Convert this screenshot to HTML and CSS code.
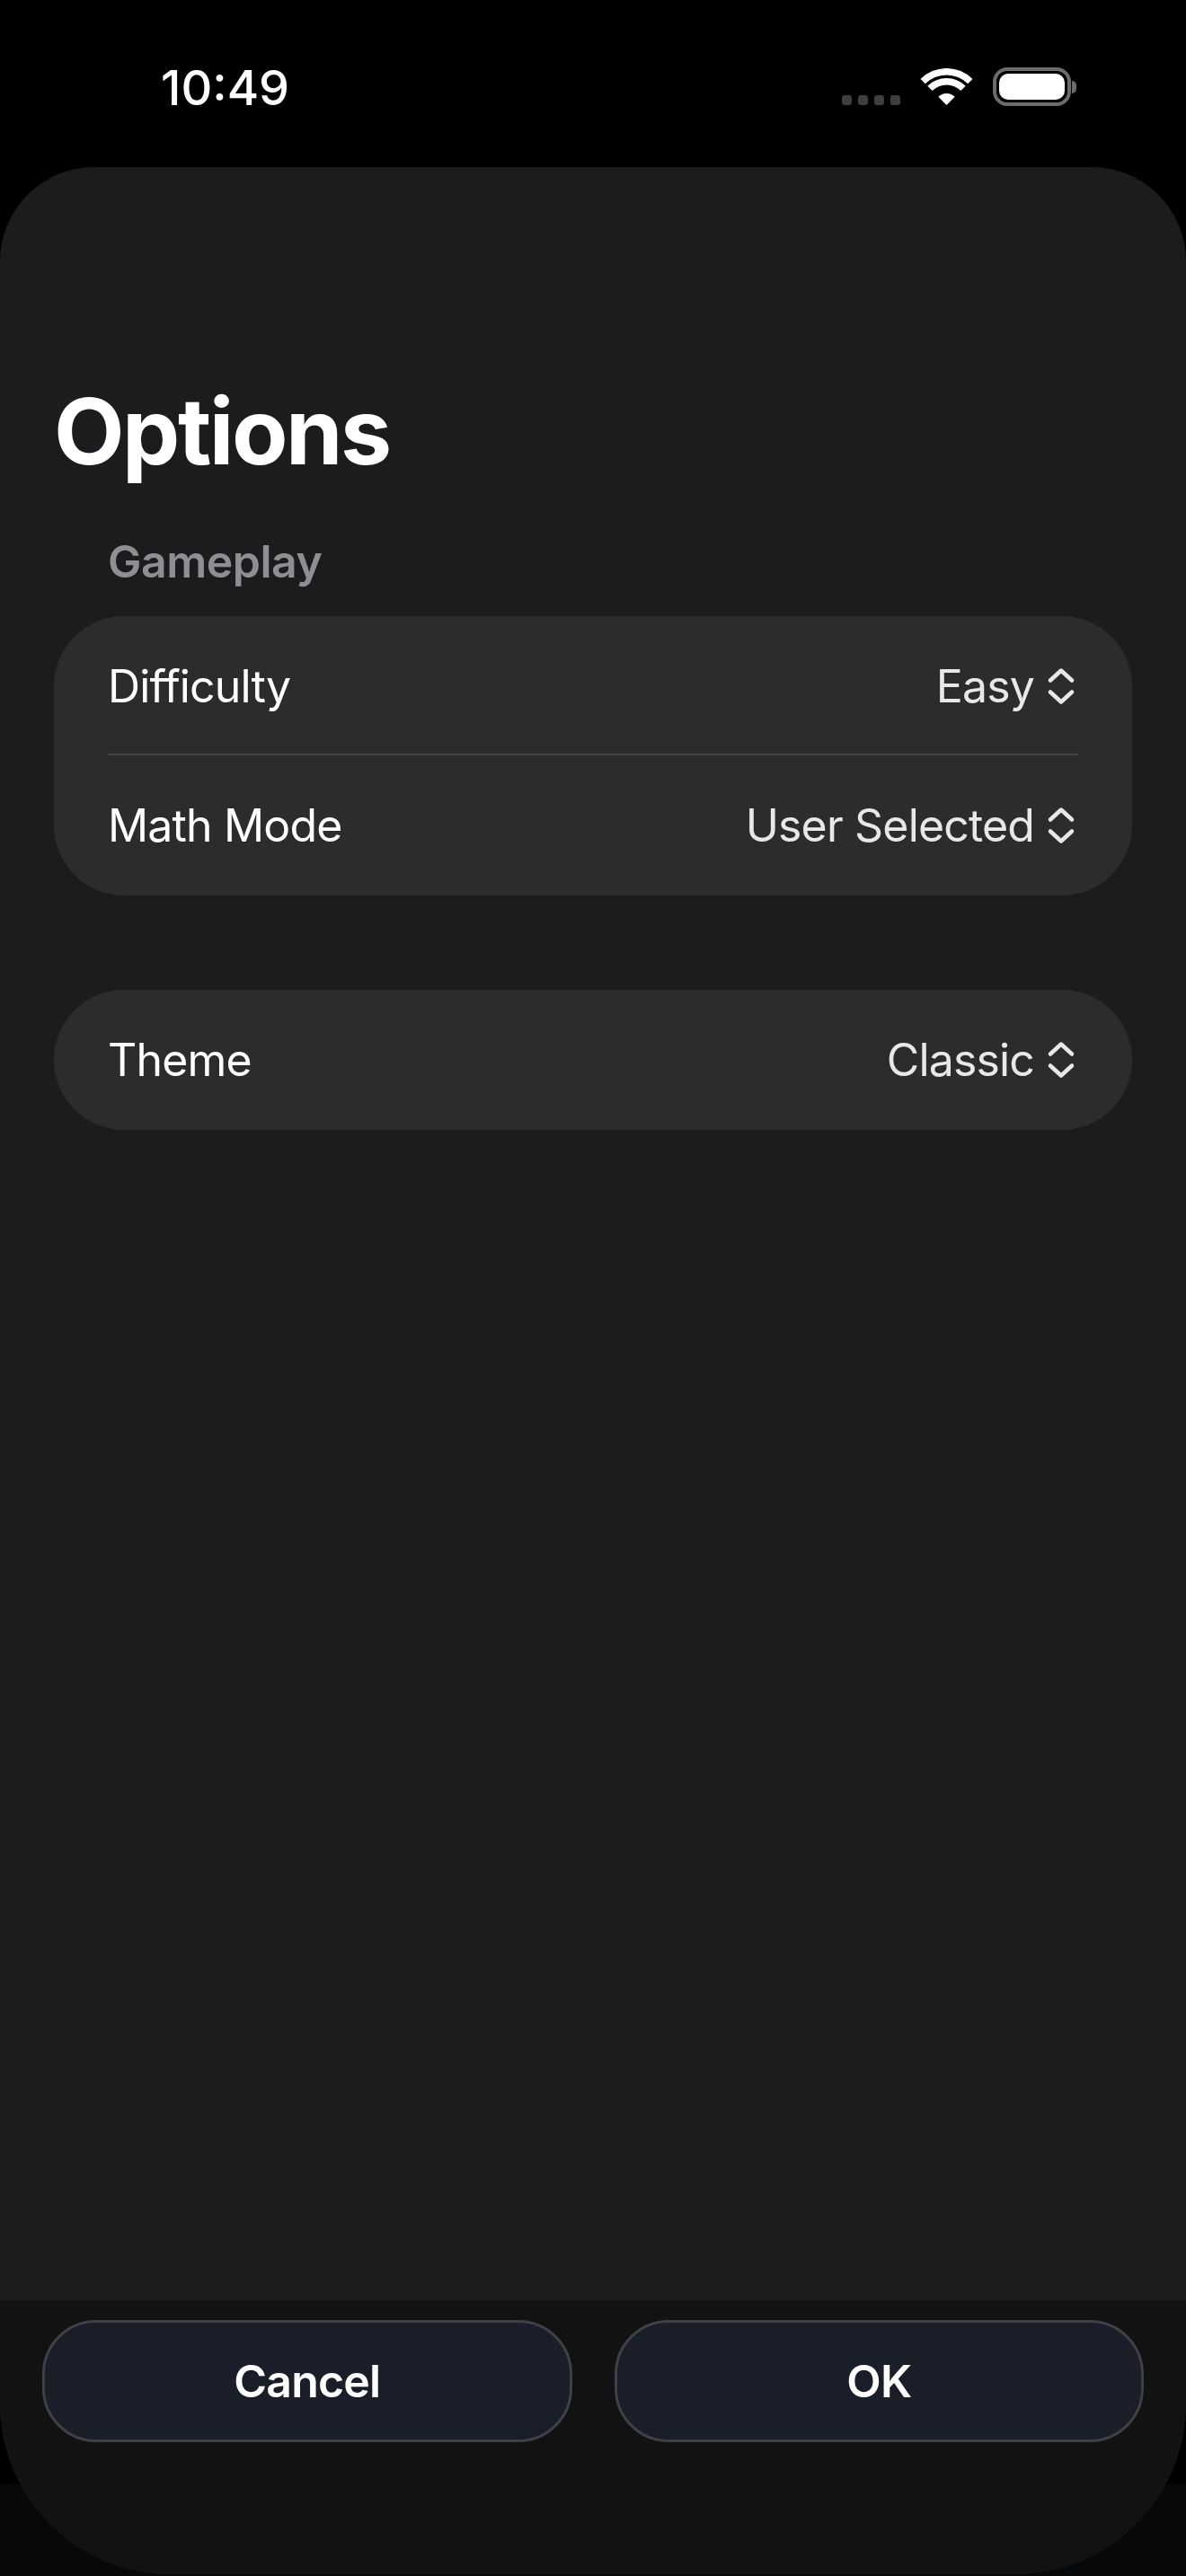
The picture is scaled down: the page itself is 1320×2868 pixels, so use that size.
FILE: index.html
```html
<!DOCTYPE html>
<html lang="en">
<head>
    <meta charset="UTF-8">
    <meta name="viewport" content="width=device-width, initial-scale=1.0">
    <title>Options</title>
    <link rel="stylesheet" href="styles.css">
</head>
<body>
    <div class="status-bar">
        <span class="time">10:49</span>
        <div class="status-icons">
            <div class="signal">
                <span class="dot"></span>
                <span class="dot"></span>
                <span class="dot"></span>
                <span class="dot"></span>
            </div>
            <svg class="wifi" width="59" height="41" viewBox="-1 0 59 41">
                <path d="M-0.5 12A41 41 0 0 1 57.5 12L52.2 17.3A33.5 33.5 0 0 0 4.8 17.3Z"/>
                <path d="M7.3 19.8A30 30 0 0 1 49.7 19.8L44.4 25.1A22.5 22.5 0 0 0 12.6 25.1Z"/>
                <path d="M19.3 31.8A13 13 0 0 1 37.7 31.8L28.5 41Z"/>
            </svg>
            <div class="battery">
                <div class="battery-body"><div class="battery-level"></div></div>
                <div class="battery-nub"></div>
            </div>
        </div>
    </div>

    <div class="sheet">
        <div class="content">
            <h1>Options</h1>
            <h2>Gameplay</h2>
            <div class="card">
                <div class="row">
                    <span class="row-label">Difficulty</span>
                    <span class="row-value">Easy
                        <svg class="updown" width="36" height="44" viewBox="0 0 36 44"><path d="M5 15.5L17 4.5L29 15.5M5 28.5L17 39.5L29 28.5"/></svg>
                    </span>
                </div>
                <div class="divider"></div>
                <div class="row">
                    <span class="row-label">Math Mode</span>
                    <span class="row-value">User Selected
                        <svg class="updown" width="36" height="44" viewBox="0 0 36 44"><path d="M5 15.5L17 4.5L29 15.5M5 28.5L17 39.5L29 28.5"/></svg>
                    </span>
                </div>
            </div>
            <div class="card card-theme">
                <div class="row">
                    <span class="row-label">Theme</span>
                    <span class="row-value">Classic
                        <svg class="updown" width="36" height="44" viewBox="0 0 36 44"><path d="M5 15.5L17 4.5L29 15.5M5 28.5L17 39.5L29 28.5"/></svg>
                    </span>
                </div>
            </div>
        </div>

        <div class="footer">
            <button type="button">Cancel</button>
            <button type="button">OK</button>
        </div>
    </div>
</body>
</html>
```

FILE: styles.css
```css
* {
    box-sizing: border-box;
}
html, body {
    height: 100%;
}
body {
    font-family: Inter, "Liberation Sans", sans-serif;
    margin: 0;
    background: linear-gradient(#000 2766px, #07080a 2766px);
    color: #fff;
    display: flex;
    flex-direction: column;
    overflow: hidden;
}
.status-bar {
    height: 186px;
    flex-shrink: 0;
    display: flex;
    justify-content: space-between;
    padding: 66px 122px 0 179px;
}
.time {
    font-size: 54px;
    line-height: 64px;
    font-weight: 500;
}
.status-icons {
    display: flex;
    align-items: flex-start;
    padding-top: 9px;
}
.signal {
    display: flex;
    gap: 7px;
    margin-top: 31px;
    margin-right: 22px;
}
.dot {
    width: 11px;
    height: 11px;
    border-radius: 3px;
    background-color: #3e3e3e;
}
.wifi {
    fill: #fff;
    margin-top: 1px;
    margin-right: 22px;
}
.battery {
    display: flex;
    align-items: center;
    gap: 1px;
}
.battery-body {
    width: 87px;
    height: 43px;
    border: 4px solid #6c6c6c;
    border-radius: 16px;
    padding: 3px;
}
.battery-level {
    height: 100%;
    background-color: #fff;
    border-radius: 10px;
}
.battery-nub {
    width: 5px;
    height: 14px;
    background-color: #6c6c6c;
    border-radius: 0 5px 5px 0;
}
.sheet {
    flex: 1;
    display: flex;
    flex-direction: column;
    background-color: #1c1c1e;
    border-radius: 105px 105px 190px 190px;
    margin-bottom: 2px;
    overflow: hidden;
}
.content {
    flex: 1;
    padding: 0 60px;
}
h1 {
    font-size: 102px;
    line-height: 120px;
    font-weight: 700;
    letter-spacing: -2.5px;
    margin: 234px 0 0 0;
}
h2 {
    font-size: 50px;
    line-height: 60px;
    font-weight: 600;
    letter-spacing: -0.5px;
    color: #8e8e93;
    margin: 55px 0 0 60px;
}
.card {
    background-color: #2c2c2e;
    border-radius: 78px;
    margin-top: 31px;
    padding: 0 60px;
}
.card-theme {
    margin-top: 105px;
}
.row {
    height: 155.5px;
    display: flex;
    justify-content: space-between;
    align-items: center;
    font-size: 50px;
    letter-spacing: -0.85px;
}
.row-value {
    display: flex;
    align-items: center;
    gap: 13px;
    color: #e8e8e8;
}
.updown {
    fill: none;
    stroke: #e8e8e8;
    stroke-width: 4.5;
    stroke-linecap: round;
    stroke-linejoin: round;
}
.divider {
    height: 2px;
    background-color: #414144;
    margin: -3px 0 1px;
}
.footer {
    flex-shrink: 0;
    height: 305px;
    background-color: #121213;
    display: flex;
    gap: 47px;
    padding: 22px 47px 0;
    align-items: flex-start;
}
button {
    flex: 1;
    height: 136px;
    background-color: #1a1e28;
    border: 3px solid #404146;
    border-radius: 60px;
    color: #fff;
    font-family: inherit;
    font-size: 50px;
    font-weight: 600;
    letter-spacing: -0.8px;
}
```
